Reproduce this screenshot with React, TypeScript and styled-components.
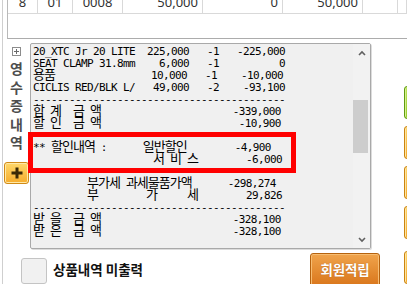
import React from "react";
import styled, { createGlobalStyle } from "styled-components";

const Global = createGlobalStyle`
  html, body { margin: 0; padding: 0; background: #ffffff; overflow: hidden; }
  #root { width: 407px; height: 284px; overflow: hidden; }
`;

const Page = styled.div`
  width: 407px;
  height: 284px;
  overflow: hidden;
  background: #ffffff;
  font-family: "Noto Sans CJK KR", "Noto Sans", sans-serif;
`;

const Frame = styled.div`
  margin-left: 2px;
  border-left: 1px solid #cfcfcf;
  height: 100%;
  display: flex;
  flex-direction: column;
`;

const TableBox = styled.div`
  margin-left: 4px;
  height: 39px;
  box-sizing: border-box;
  border-left: 1px solid #b9b9b9;
  border-bottom: 1px solid #acacac;
  overflow: hidden;
  flex: none;
`;

const GridRow = styled.div`
  display: grid;
  grid-template-columns: 30px 35px 50px 80px 80px 80px 35px 1fr;
  height: 23px;
  margin-top: -9px;
  box-sizing: border-box;
  border-bottom: 1px solid #d9d9d9;
`;

const Cell = styled.div<{ $align?: "center" | "right" }>`
  display: flex;
  align-items: center;
  justify-content: ${(p) => (p.$align === "right" ? "flex-end" : "center")};
  padding: 0 4px;
  border-right: 1px solid #d9d9d9;
  font-family: "Noto Sans", "Open Sans", sans-serif;
  font-size: 13px;
  color: #333;
  box-sizing: border-box;
`;

const MainGrid = styled.div`
  flex: 1;
  display: grid;
  grid-template-columns: 27px 341px 33px 1fr;
  grid-template-rows: 206px 1fr;
  margin-top: 4px;
`;

const Tab = styled.div`
  grid-column: 1;
  grid-row: 1;
  display: flex;
  flex-direction: column;
  align-items: center;
`;

const SmallPlus = styled.div`
  margin-top: 4px;
  width: 9px;
  height: 9px;
  box-sizing: border-box;
  border: 1px solid #8c8c8c;
  display: flex;
  align-items: center;
  justify-content: center;
  background: #fff;
`;

const VLabel = styled.div`
  margin-top: 3px;
  display: flex;
  flex-direction: column;
  align-items: center;
`;

const VChar = styled.span`
  display: block;
  height: 18.5px;
  line-height: 18.5px;
  font-size: 14px;
  font-weight: 700;
  color: #4d4d4d;
`;

const OrangePlus = styled.div`
  margin-top: 10px;
  width: 25px;
  height: 22px;
  box-sizing: border-box;
  border: 1px solid #d18a16;
  border-radius: 3px;
  background: linear-gradient(#ffd86a, #f6ac2c);
  box-shadow: inset 0 0 0 1px #ffe9a6;
  display: flex;
  align-items: center;
  justify-content: center;
`;

const ReceiptBox = styled.div`
  grid-column: 2;
  grid-row: 1;
  position: relative;
  display: flex;
  box-sizing: border-box;
  border: 1px solid #a9a9a9;
  border-radius: 2px;
  background: #f0f0f0;
  box-shadow: 1px 1px 0 #dcdcdc;
`;

const TextArea = styled.div`
  flex: 1;
  padding-left: 2px;
  overflow: hidden;
`;

const Line = styled.div`
  height: 12px;
  line-height: 12px;
  white-space: pre;
  font-family: "Noto Sans CJK KR", sans-serif;
  font-size: 12px;
  color: #000;
`;

const Lat = styled.span`
  font-family: "DejaVu Sans Mono", "Liberation Mono", monospace;
  font-size: 11px;
  letter-spacing: -0.6226px;
`;

const Han = styled.span`
  font-family: "Noto Sans CJK KR", sans-serif;
  font-size: 13px;
  letter-spacing: -1px;
`;

const Scrollbar = styled.div`
  width: 17px;
  display: flex;
  flex-direction: column;
  background: #f2f2f2;
`;

const ScrollArrow = styled.div`
  height: 17px;
  display: flex;
  align-items: center;
  justify-content: center;
`;

const Track = styled.div`
  flex: 1;
  padding-top: 39px;
`;

const Thumb = styled.div`
  width: 15px;
  height: 53px;
  background: #cdcdcd;
`;

const RedFrame = styled.div`
  position: absolute;
  left: -3px;
  top: 88px;
  width: 268px;
  height: 41px;
  box-sizing: border-box;
  border: 5px solid #ff0000;
  pointer-events: none;
`;

const RightCol = styled.div`
  grid-column: 4;
  grid-row: 1 / span 2;
  display: flex;
  flex-direction: column;
  gap: 7px;
  padding-top: 43px;
`;

const SideBtn = styled.div<{ $green?: boolean; $gapBefore?: number }>`
  width: 24px;
  height: 33px;
  flex: none;
  box-sizing: border-box;
  border-radius: 3px;
  margin-top: ${(p) => p.$gapBefore ?? 0}px;
  border: 1px solid ${(p) => (p.$green ? "#5f9a12" : "#c98412")};
  background: ${(p) =>
    p.$green ? "linear-gradient(#b9e35a, #96cc2c)" : "linear-gradient(#ffd46a, #f3a72a)"};
  box-shadow: inset 1px 0 0 ${(p) => (p.$green ? "#d6f08e" : "#ffe4a0")};
`;

const BottomRow = styled.div`
  grid-column: 1 / 4;
  grid-row: 2;
  display: flex;
  align-items: flex-start;
`;

const CheckBox = styled.div`
  margin: 9px 0 0 18px;
  width: 26px;
  height: 26px;
  box-sizing: border-box;
  border: 1px solid #c4c4c4;
  border-radius: 3px;
  background: #f1f1f1;
  flex: none;
`;

const CheckLabel = styled.span`
  margin: 10px 0 0 6px;
  line-height: 20px;
  font-size: 13.5px;
  font-weight: 700;
  color: #111;
  white-space: nowrap;
`;

const ActionButton = styled.div`
  margin: 4px 24px 0 auto;
  width: 70px;
  height: 34px;
  box-sizing: border-box;
  border: 1px solid #b5620e;
  border-radius: 3px;
  background: linear-gradient(#f0a44c, #d9761b);
  box-shadow: inset 0 0 0 1px #f7bd72;
  display: flex;
  align-items: center;
  justify-content: center;
  padding-bottom: 3px;
  color: #fff;
  font-size: 13.5px;
  font-weight: 700;
  letter-spacing: -0.2px;
  text-shadow: 0 0 1px rgba(120, 50, 0, 0.5);
`;

const HANGUL = /([\u3131-\u318E\uAC00-\uD7A3]+)/;
const isHan = (s: string) => /^[\u3131-\u318E\uAC00-\uD7A3]+$/.test(s);
const cols = (s: string) =>
  Array.from(s).reduce((n, c) => n + (isHan(c) ? 2 : 1), 0);

type Seg = { t: string; at?: number; end?: number };
const build = (segs: Seg[]) => {
  let s = "";
  for (const seg of segs) {
    const start = seg.at ?? (seg.end ?? 0) - cols(seg.t);
    s += " ".repeat(Math.max(0, start - cols(s))) + seg.t;
  }
  return s;
};

const DASH = "-".repeat(42);

const receipt: string[] = [
  build([{ t: "20_XTC Jr 20 LITE", at: 0 }, { t: "225,000", end: 26 }, { t: "-1", end: 31 }, { t: "-225,000", end: 42 }]),
  build([{ t: "SEAT CLAMP 31.8mm", at: 0 }, { t: "6,000", end: 26 }, { t: "-1", end: 31 }, { t: "0", end: 42 }]),
  build([{ t: "용품", at: 0 }, { t: "10,000", end: 26 }, { t: "-1", end: 31 }, { t: "-10,000", end: 42 }]),
  build([{ t: "CICLIS RED/BLK L/", at: 0 }, { t: "49,000", end: 26 }, { t: "-2", end: 31 }, { t: "-93,100", end: 42 }]),
  DASH,
  build([{ t: "합 계  금 액", at: 0 }, { t: "-339,000", end: 42 }]),
  build([{ t: "할 인  금 액", at: 0 }, { t: "-10,900", end: 42 }]),
  "",
  build([{ t: "** 할인내역 :", at: 0 }, { t: "일반할인", at: 19 }, { t: "-4,900", end: 41 }]),
  build([{ t: "서 비 스", at: 20 }, { t: "-6,000", end: 42 }]),
  "",
  build([{ t: "부가세 과세물품가액", at: 9 }, { t: "-298,274", end: 42 }]),
  build([{ t: "부", at: 9 }, { t: "가", at: 19 }, { t: "세", at: 26 }, { t: "29,826", end: 42 }]),
  DASH,
  build([{ t: "받 을  금 액", at: 0 }, { t: "-328,100", end: 42 }]),
  build([{ t: "받 은  금 액", at: 0 }, { t: "-328,100", end: 42 }]),
];

const MonoText: React.FC<{ text: string }> = ({ text }) => (
  <>
    {text
      .split(HANGUL)
      .filter((p) => p.length > 0)
      .map((p, i) => (isHan(p) ? <Han key={i}>{p}</Han> : <Lat key={i}>{p}</Lat>))}
  </>
);

const Chevron: React.FC<{ up?: boolean }> = ({ up }) => (
  <svg width="8" height="6" viewBox="0 0 8 6">
    <polyline
      points={up ? "1,5 4,2 7,5" : "1,1 4,4 7,1"}
      fill="none"
      stroke="#606060"
      strokeWidth="1.6"
    />
  </svg>
);

const tableCells: { v: string; align?: "center" | "right" }[] = [
  { v: "8" },
  { v: "01" },
  { v: "0008" },
  { v: "50,000", align: "right" },
  { v: "0", align: "right" },
  { v: "50,000", align: "right" },
  { v: "" },
  { v: "" },
];

export default function App() {
  return (
    <Page>
      <Global />
      <Frame>
        <TableBox>
          <GridRow>
            {tableCells.map((c, i) => (
              <Cell key={i} $align={c.align}>
                {c.v}
              </Cell>
            ))}
          </GridRow>
        </TableBox>
        <MainGrid>
          <Tab>
            <SmallPlus>
              <svg width="7" height="7" viewBox="0 0 7 7">
                <path d="M1 3.5h5M3.5 1v5" stroke="#6a6a6a" strokeWidth="1" />
              </svg>
            </SmallPlus>
            <VLabel>
              {Array.from("영수증내역").map((ch, i) => (
                <VChar key={i}>{ch}</VChar>
              ))}
            </VLabel>
            <OrangePlus>
              <svg width="14" height="14" viewBox="0 0 14 14">
                <path d="M7 1.5v11M1.5 7h11" stroke="#3a2a06" strokeWidth="3" />
              </svg>
            </OrangePlus>
          </Tab>
          <ReceiptBox>
            <TextArea>
              {receipt.map((l, i) => (
                <Line key={i}>
                  <MonoText text={l} />
                </Line>
              ))}
            </TextArea>
            <Scrollbar>
              <ScrollArrow>
                <Chevron up />
              </ScrollArrow>
              <Track>
                <Thumb />
              </Track>
              <ScrollArrow>
                <Chevron />
              </ScrollArrow>
            </Scrollbar>
            <RedFrame />
          </ReceiptBox>
          <RightCol>
            <SideBtn $green />
            <SideBtn />
            <SideBtn />
            <SideBtn />
            <SideBtn $gapBefore={5} />
          </RightCol>
          <BottomRow>
            <CheckBox />
            <CheckLabel>상품내역 미출력</CheckLabel>
            <ActionButton>회원적립</ActionButton>
          </BottomRow>
        </MainGrid>
      </Frame>
    </Page>
  );
}
